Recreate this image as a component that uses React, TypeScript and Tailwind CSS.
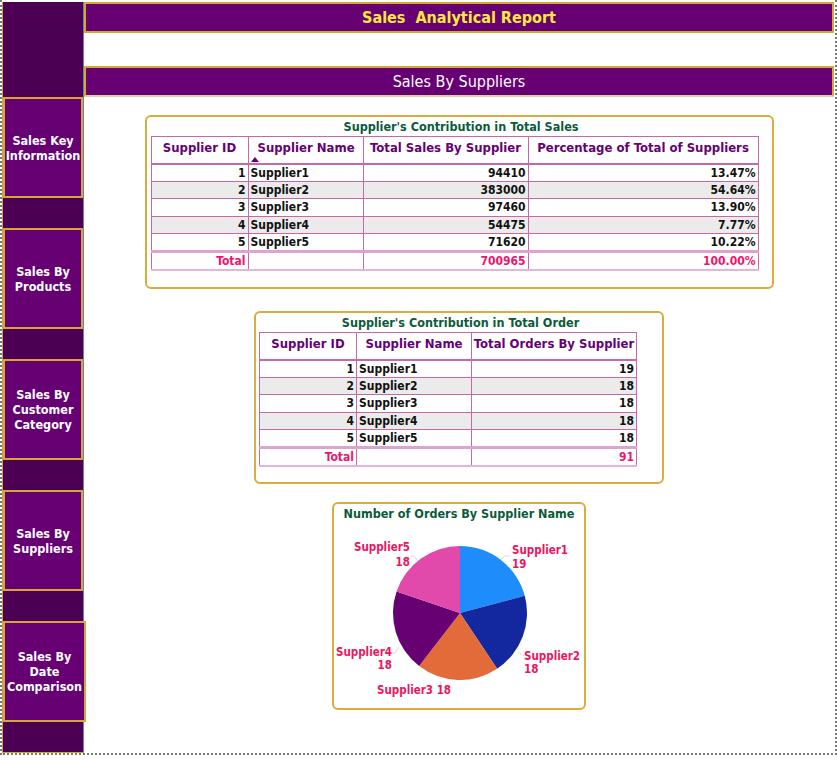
const FONT = "font-['DejaVu_Sans_Condensed','DejaVu_Sans',sans-serif]";

const navItems = [
  ["Sales Key", "Information"],
  ["Sales By", "Products"],
  ["Sales By", "Customer", "Category"],
  ["Sales By", "Suppliers"],
  ["Sales By", "Date", "Comparison"],
];

const sales = [
  { id: 1, name: "Supplier1", total: 94410, pct: "13.47%" },
  { id: 2, name: "Supplier2", total: 383000, pct: "54.64%" },
  { id: 3, name: "Supplier3", total: 97460, pct: "13.90%" },
  { id: 4, name: "Supplier4", total: 54475, pct: "7.77%" },
  { id: 5, name: "Supplier5", total: 71620, pct: "10.22%" },
];

const orders = [
  { id: 1, name: "Supplier1", count: 19 },
  { id: 2, name: "Supplier2", count: 18 },
  { id: 3, name: "Supplier3", count: 18 },
  { id: 4, name: "Supplier4", count: 18 },
  { id: 5, name: "Supplier5", count: 18 },
];

function Sidebar() {
  return (
    <div className="w-[82px] flex flex-col border-l border-[#c9a53a] border-r border-r-[#6d7fa3] border-b border-b-[#c9a53a] bg-[#4b0053]">
      <div className="h-[95px] bg-[#4b0053]" />
      {navItems.map((lines, i) => (
        <div key={i} className="flex flex-col">
          <div
            className={
              "h-[101px] bg-[#660073] border-2 border-[#d4a833] flex flex-col items-center justify-center text-white font-bold text-[12.5px] leading-[15px] text-center " +
              (i === navItems.length - 1 ? "w-[83px] -mr-[3px] relative z-10" : "")
            }
          >
            {lines.map((l) => (
              <span key={l}>{l}</span>
            ))}
          </div>
          <div className={i === navItems.length - 1 ? "h-[26px]" : "h-[30px]"} />
        </div>
      ))}
    </div>
  );
}

// table cell styles
const th = "border border-[#c56aa9] text-[#660073] font-bold text-[13px] align-top pt-[1px] h-[27px] text-center";
const td = "border border-[#c56aa9] h-[17.5px] leading-[16px] text-[12px] font-bold text-[#111]";
const tot = "border border-[#c56aa9] border-t-[3px] border-t-[#dfa3cf] border-b-2 border-b-[#e3b6d7] h-[18px] leading-[15px] pt-[1px] text-[12px] font-bold text-[#f0146e]";

function SortArrow() {
  return (
    <svg width="8" height="5" viewBox="0 0 8 5" className="block -ml-[1px] -mt-[1px]">
      <polygon points="0,5 4,0 8,5" fill="#660073" />
    </svg>
  );
}

function SalesTable() {
  return (
    <div className="w-[629px] border-2 border-[#d9ad3c] rounded-md pt-[1px] pl-[4px] pb-[16px] bg-white">
      <div className="h-[18px] leading-[18px] text-center text-[12.5px] font-bold text-[#0b5a3a]">
        Supplier's Contribution in Total Sales
      </div>
      <table className="border-collapse w-[607px] table-fixed">
        <colgroup>
          <col className="w-[97px]" />
          <col className="w-[115px]" />
          <col className="w-[165px]" />
          <col className="w-[230px]" />
        </colgroup>
        <thead>
          <tr className="border-b-2 border-b-[#c56aa9]">
            <th className={th}>Supplier ID</th>
            <th className={th + " !text-left pl-[3px]"}>
              <div className="pl-[6px]">Supplier Name</div>
              <SortArrow />
            </th>
            <th className={th}>Total Sales By Supplier</th>
            <th className={th}>Percentage of Total of Suppliers</th>
          </tr>
        </thead>
        <tbody>
          {sales.map((r, i) => (
            <tr key={r.id} className={i % 2 === 1 ? "bg-[#ebebeb]" : "bg-white"}>
              <td className={td + " text-right pr-[2px]"}>{r.id}</td>
              <td className={td + " pl-[2px]"}>{r.name}</td>
              <td className={td + " text-right pr-[2px]"}>{r.total}</td>
              <td className={td + " text-right pr-[2px]"}>{r.pct}</td>
            </tr>
          ))}
          <tr>
            <td className={tot + " text-right pr-[2px]"}>Total</td>
            <td className={tot} />
            <td className={tot + " text-right pr-[2px]"}>700965</td>
            <td className={tot + " text-right pr-[2px]"}>100.00%</td>
          </tr>
        </tbody>
      </table>
    </div>
  );
}

function OrderTable() {
  return (
    <div className="w-[410px] border-2 border-[#d9ad3c] rounded-md pt-[1px] pl-[3px] pb-[15px] bg-white">
      <div className="h-[18px] leading-[18px] text-center text-[12.5px] font-bold text-[#0b5a3a]">
        Supplier's Contribution in Total Order
      </div>
      <table className="border-collapse w-[377px] table-fixed">
        <colgroup>
          <col className="w-[97px]" />
          <col className="w-[115px]" />
          <col className="w-[165px]" />
        </colgroup>
        <thead>
          <tr className="border-b-2 border-b-[#c56aa9]">
            <th className={th}>Supplier ID</th>
            <th className={th}>Supplier Name</th>
            <th className={th}>Total Orders By Supplier</th>
          </tr>
        </thead>
        <tbody>
          {orders.map((r, i) => (
            <tr key={r.id} className={i % 2 === 1 ? "bg-[#ebebeb]" : "bg-white"}>
              <td className={td + " text-right pr-[2px]"}>{r.id}</td>
              <td className={td + " pl-[2px]"}>{r.name}</td>
              <td className={td + " text-right pr-[2px]"}>{r.count}</td>
            </tr>
          ))}
          <tr>
            <td className={tot + " text-right pr-[2px]"}>Total</td>
            <td className={tot} />
            <td className={tot + " text-right pr-[2px]"}>91</td>
          </tr>
        </tbody>
      </table>
    </div>
  );
}

function PieChart() {
  const cx = 126;
  const cy = 109;
  const r = 67;
  const colors = ["#1e8cfa", "#13279f", "#e36b39", "#660073", "#e14aab"];
  const total = orders.reduce((s, o) => s + o.count, 0);
  let acc = 0;
  const pt = (deg: number) => {
    const a = (deg * Math.PI) / 180;
    return [cx + r * Math.sin(a), cy - r * Math.cos(a)];
  };
  const slices = orders.map((o, i) => {
    const start = (acc / total) * 360;
    acc += o.count;
    const end = (acc / total) * 360;
    const [x1, y1] = pt(start);
    const [x2, y2] = pt(end);
    const large = end - start > 180 ? 1 : 0;
    return (
      <path
        key={o.id}
        d={`M${cx},${cy} L${x1},${y1} A${r},${r} 0 ${large} 1 ${x2},${y2} Z`}
        fill={colors[i]}
      />
    );
  });
  const lbl = "text-[11.5px] fill-[#ea1662] font-bold";
  return (
    <div className="w-[254px] h-[208px] border-2 border-[#d9ad3c] rounded-md bg-white">
      <div className="h-[20px] leading-[20px] text-center text-[12.5px] font-bold text-[#0b5a3a]">
        Number of Orders By Supplier Name
      </div>
      <svg width="250" height="184" viewBox="0 20 250 184" className="block">
        <g stroke="#d8d8d8" strokeWidth="1" fill="none">
          <polyline points="164,57 171,52 176,52" />
          <polyline points="184,148 190,152" />
          <polyline points="106,177 108,183 104,183" />
          <polyline points="65,143 61,149 58,149" />
          <polyline points="84,57 80,52 77,52" />
        </g>
        {slices}
        <text x="178" y="50" className={lbl}>Supplier1</text>
        <text x="178" y="64" className={lbl}>19</text>
        <text x="190" y="156" className={lbl}>Supplier2</text>
        <text x="190" y="169" className={lbl}>18</text>
        <text x="43" y="190" className={lbl}>Supplier3 18</text>
        <text x="58" y="152" textAnchor="end" className={lbl}>Supplier4</text>
        <text x="58" y="165" textAnchor="end" className={lbl}>18</text>
        <text x="76" y="47" textAnchor="end" className={lbl}>Supplier5</text>
        <text x="76" y="62" textAnchor="end" className={lbl}>18</text>
      </svg>
    </div>
  );
}

export default function App() {
  return (
    <div className={"w-[837px] h-[755px] bg-white border-l-2 border-r-2 border-b-2 border-dotted border-[#777] pt-[2px] flex " + FONT}>
      <Sidebar />
      <div className="flex-1 flex flex-col items-center pr-[1px] self-start">
        <div className="w-full h-[31px] bg-[#660073] border-2 border-[#d4a833] flex items-center justify-center text-[16px] font-bold text-[#ffea3a]">
          Sales&nbsp; Analytical Report
        </div>
        <div className="w-full h-[31px] mt-[33px] bg-[#660073] border-2 border-[#d4a833] border-b-[#e8c9a8] flex items-center justify-center text-[16px] text-white">
          Sales By Suppliers
        </div>
        <div className="mt-[18px]">
          <SalesTable />
        </div>
        <div className="mt-[22px]">
          <OrderTable />
        </div>
        <div className="mt-[18px]">
          <PieChart />
        </div>
      </div>
    </div>
  );
}
